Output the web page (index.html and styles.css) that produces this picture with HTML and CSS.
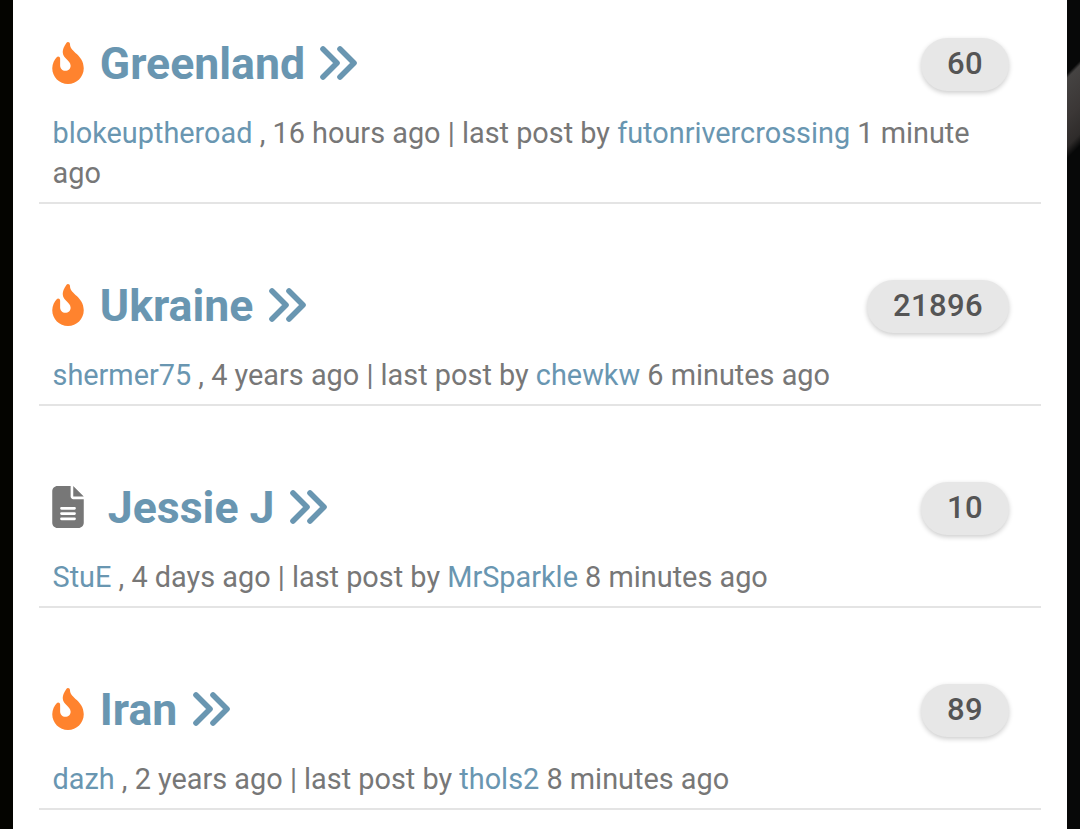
FILE: index.html
```
<!DOCTYPE html>
<html lang="en">
<head>
  <meta charset="UTF-8" />
  <title>Discussions</title>
  <link rel="stylesheet" href="styles.css">
</head>
<body>

  <!-- Shared icons -->
  <svg class="sprite">
    <symbol id="fire" viewBox="0 0 384 512">
      <path d="M216 23.86c0-23.8-30.65-32.77-44.15-13.04C48 191.85 224 200 224 288c0 35.63-29.11 64.46-64.85 63.99-35.17-.45-63.15-29.77-63.15-64.94v-85.51c0-21.7-26.47-32.23-41.43-16.5C27.8 213.16 0 261.33 0 320c0 105.87 86.13 192 192 192s192-86.13 192-192c0-170.29-168-193-168-296.14z"/>
    </symbol>
    <symbol id="file" viewBox="0 0 384 512">
      <path fill-rule="evenodd" d="M64 0C28.700 0 0 28.700 0 64v384c0 35.300 28.700 64 64 64h256c35.300 0 64-28.700 64-64V160H256c-17.700 0-32-14.300-32-32V0H64zM256 0v128h128L256 0zM112 256h160a16 16 0 0 1 0 32H112a16 16 0 0 1 0-32zm0 64h160a16 16 0 0 1 0 32H112a16 16 0 0 1 0-32zm0 64h160a16 16 0 0 1 0 32H112a16 16 0 0 1 0-32z"/>
    </symbol>
    <symbol id="angles" viewBox="0 0 38 34">
      <path d="M3 3l14 14L3 31M20 3l14 14L20 31" fill="none" stroke="currentColor" stroke-width="5.600" stroke-linecap="round" stroke-linejoin="round"/>
    </symbol>
  </svg>

  <main class="topics">
    <div class="topic">
      <div class="topic-head">
        <svg class="icon hot"><use href="#fire"/></svg>
        <a class="title">Greenland</a>
        <svg class="angles"><use href="#angles"/></svg>
        <span class="badge">60</span>
      </div>
      <p class="meta"><a>blokeuptheroad</a> , 16 hours ago | last post by <a>futonrivercrossing</a> 1 minute ago</p>
    </div>

    <div class="topic">
      <div class="topic-head">
        <svg class="icon hot"><use href="#fire"/></svg>
        <a class="title">Ukraine</a>
        <svg class="angles"><use href="#angles"/></svg>
        <span class="badge">21896</span>
      </div>
      <p class="meta"><a>shermer75</a> , 4 years ago | last post by <a>chewkw</a> 6 minutes ago</p>
    </div>

    <div class="topic">
      <div class="topic-head">
        <svg class="icon file"><use href="#file"/></svg>
        <a class="title">Jessie J</a>
        <svg class="angles"><use href="#angles"/></svg>
        <span class="badge">10</span>
      </div>
      <p class="meta"><a>StuE</a> , 4 days ago | last post by <a>MrSparkle</a> 8 minutes ago</p>
    </div>

    <div class="topic">
      <div class="topic-head">
        <svg class="icon hot"><use href="#fire"/></svg>
        <a class="title">Iran</a>
        <svg class="angles"><use href="#angles"/></svg>
        <span class="badge">89</span>
      </div>
      <p class="meta"><a>dazh</a> , 2 years ago | last post by <a>thols2</a> 8 minutes ago</p>
    </div>
  </main>

</body>
</html>
```
FILE: styles.css
```
* { box-sizing: border-box; }

body {
  margin: 0;
  height: 829px;
  overflow: hidden;
  padding: 0 13px;
  font-family: Roboto, sans-serif;
  background:
    linear-gradient(135deg, transparent 13%, #454342 17%, #3b3736 50%, #2e2b2a 74%, transparent 84%) right 58px / 13px 107px no-repeat,
    linear-gradient(to right, #040400 50%, #070808 50%);
}

.sprite { display: none; }

.topics {
  background: white;
  min-height: 829px;
  padding: 0 26px;
  display: flex;
  flex-direction: column;
  gap: 38px;
}

.topic {
  padding: 37px 32px 9px 13px;
  border-bottom: 2px solid #e4e4e4;
}

.topic-head {
  display: flex;
  align-items: center;
  height: 54px;
}

.icon {
  width: 32px;
  height: 42px;
  margin-right: 15.800px;
  margin-bottom: 2px;
}

.hot { fill: #ff832e; }

.file {
  fill: #777;
  margin-right: 23.800px;
}

.title {
  color: #6996b1;
  font-size: 44.600px;
  font-weight: 700;
  line-height: 54px;
}

.angles {
  width: 38px;
  height: 34px;
  margin-left: 15.400px;
  margin-bottom: 3px;
  color: #6996b1;
}

.badge {
  margin-left: auto;
  height: 53px;
  padding: 0 26px;
  border-radius: 27px;
  background: #e7e7e7;
  color: #555;
  font-size: 31px;
  font-weight: 500;
  letter-spacing: 0.4px;
  line-height: 51px;
  box-shadow: 0 2px 5px rgba(0, 0, 0, 0.2);
}

.meta {
  margin: 22px 0 0 0.500px;
  color: #777;
  font-size: 28.870px;
  line-height: 40px;
}

.meta a { color: #6996b1; }
```
